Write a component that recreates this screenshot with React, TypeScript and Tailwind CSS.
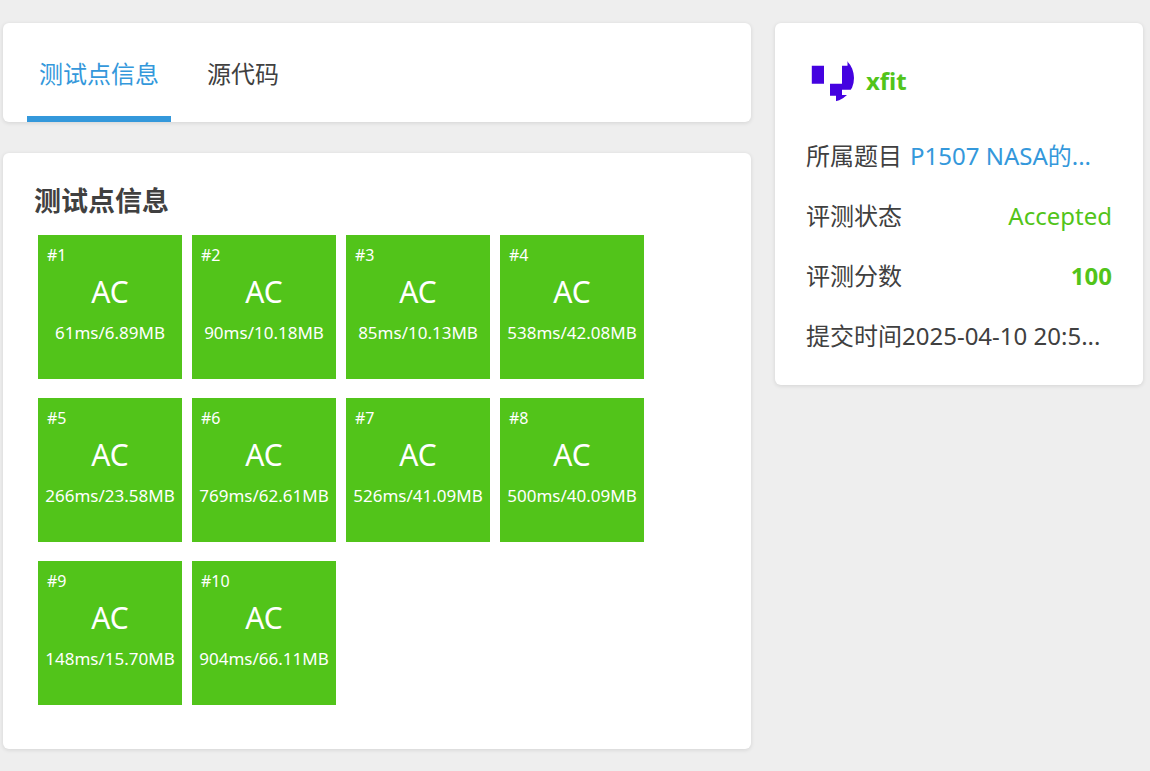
import React from "react";

const points: [string, string][] = [
  ["61ms", "6.89MB"],
  ["90ms", "10.18MB"],
  ["85ms", "10.13MB"],
  ["538ms", "42.08MB"],
  ["266ms", "23.58MB"],
  ["769ms", "62.61MB"],
  ["526ms", "41.09MB"],
  ["500ms", "40.09MB"],
  ["148ms", "15.70MB"],
  ["904ms", "66.11MB"],
];

const card = "rounded-md bg-white shadow-[0_1px_4px_rgba(26,26,26,0.12)]";

function Avatar() {
  return (
    <svg viewBox="0 0 48 48" className="size-12 shrink-0" role="img" aria-label="xfit">
      <clipPath id="avatar">
        <circle cx="24" cy="24" r="24" />
      </clipPath>
      <g clipPath="url(#avatar)" fill="#4402e0">
        <path d="M5.800 11.800H18V29.800H5.800Z" />
        <path d="M36 11.800H41.500V6H48V35.800H36V41H48V48H30V41.700H24V29.800H36Z" />
      </g>
    </svg>
  );
}

export default function App() {
  return (
    <div className="flex min-h-screen items-start gap-6 bg-[#eee] pt-[23px] pr-[7px] pb-[22px] pl-[3px] font-['Noto_Sans','Noto_Sans_CJK_SC',sans-serif] text-2xl text-[#404040]">
      <main className="flex min-w-0 flex-1 flex-col gap-[31px]">
        <nav className={`${card} px-6`}>
          <ul className="flex gap-6">
            <li>
              <button className="block h-[99px] border-b-6 border-[#3498db] px-3 pt-2 text-[#3498db]">测试点信息</button>
            </li>
            <li>
              <button className="block h-[99px] border-b-6 border-transparent px-3 pt-2">源代码</button>
            </li>
          </ul>
        </nav>
        <section className={`${card} px-[31px] pt-[29px] pb-[44px]`}>
          <h3 className="text-[27px] leading-[38px] font-bold">测试点信息</h3>
          <div className="mt-[15px] grid w-fit grid-cols-[repeat(4,144px)] justify-start gap-x-[10px] gap-y-[19px] pl-1 text-white max-[1000px]:grid-cols-[repeat(2,144px)]">
            {points.map(([time, memory], i) => (
              <div key={i} className="h-36 bg-[#52c41a] pt-2 text-center whitespace-nowrap">
                <div className="pl-[9px] text-left text-base leading-6">#{i + 1}</div>
                <div className="text-[30px] leading-[50px]">AC</div>
                <div className="text-[17px] leading-8">
                  {time}/{memory}
                </div>
              </div>
            ))}
          </div>
        </section>
      </main>
      <aside className={`${card} w-[368px] shrink-0 px-[31px] pt-[31px] pb-[19px]`}>
        <div className="flex items-center gap-3">
          <Avatar />
          <a href="#user" className="pt-1.5 font-bold text-[#52c41a]">xfit</a>
        </div>
        <dl className="mt-6 leading-[60px]">
          <div className="flex gap-2">
            <dt>所属题目</dt>
            <dd>
              <a href="#problem" className="text-[#3498db]">P1507 NASA的...</a>
            </dd>
          </div>
          <div className="flex justify-between">
            <dt>评测状态</dt>
            <dd className="text-[#52c41a]">Accepted</dd>
          </div>
          <div className="flex justify-between">
            <dt>评测分数</dt>
            <dd className="font-bold text-[#52c41a]">100</dd>
          </div>
          <div className="flex">
            <dt>提交时间</dt>
            <dd>2025-04-10 20:5...</dd>
          </div>
        </dl>
      </aside>
    </div>
  );
}
